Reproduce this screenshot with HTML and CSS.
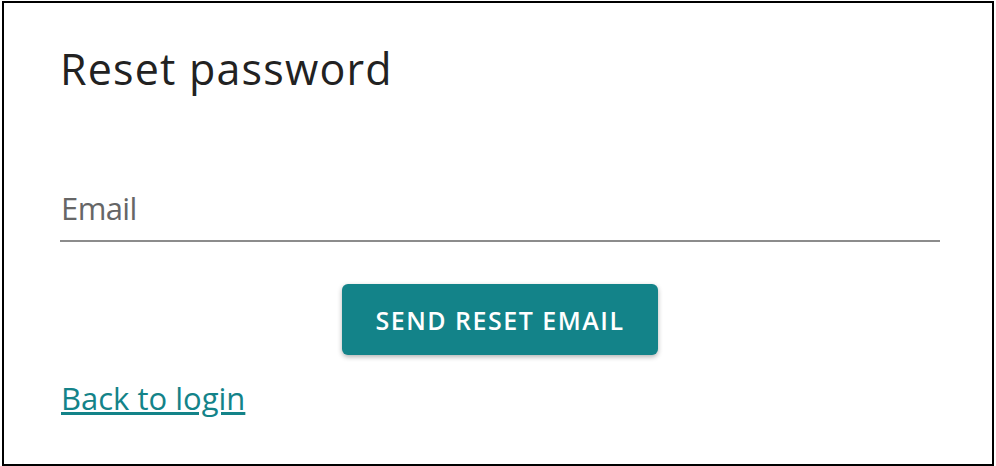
FILE: index.html
```html
<!DOCTYPE html>
<html lang="en">
<head>
  <meta charset="utf-8">
  <title>Reset password</title>
  <link rel="stylesheet" href="styles.css">
</head>
<body>
  <div class="card">
    <h1 class="titulo">Reset password</h1>
    <form class="form" name="form">
      <input class="entrada" name="email" placeholder="Email">
      <div class="acciones">
        <a href="#" class="btn">SEND RESET EMAIL</a>
      </div>
    </form>
    <a href="#" class="volver">Back to login</a>
  </div>
</body>
</html>
```

FILE: styles.css
```css
*{
  margin: 0;
  padding: 0;
  box-sizing: border-box;
  font-family: "Open Sans", sans-serif;
}

body{
  background: #fff;
}

.card{
  width: 992px;
  height: 465px;
  margin: 1px 0 0 2px;
  border: 2px solid #000;
  padding: 40px 52px 0 56px;
  display: flex;
  flex-direction: column;
}

.titulo{
  font-size: 43px;
  font-weight: 400;
  color: #222;
  line-height: 52px;
  letter-spacing: 1.2px;
}

.form{
  display: flex;
  flex-direction: column;
  margin-top: 92px;
}

.entrada{
  border: none;
  border-bottom: 2px solid #8c8c8c;
  font-size: 31px;
  letter-spacing: -0.6px;
  height: 55px;
  padding: 0 0 11px 1px;
  outline: none;
  color: #222;
}

.entrada::placeholder{
  color: #666;
}

.acciones{
  display: flex;
  justify-content: center;
  margin-top: 42px;
}

.btn{
  text-decoration: none;
  display: inline-flex;
  align-items: center;
  justify-content: center;
  width: 316px;
  height: 71px;
  background: #138389;
  color: #fff;
  font-size: 25px;
  font-weight: 600;
  letter-spacing: 1.5px;
  border-radius: 6px;
  box-shadow: 0 2px 5px rgba(0,0,0,0.3);
}

.volver{
  align-self: flex-start;
  margin-top: 22px;
  margin-left: 1px;
  font-size: 31px;
  color: #138389;
  text-decoration: underline;
}
```
